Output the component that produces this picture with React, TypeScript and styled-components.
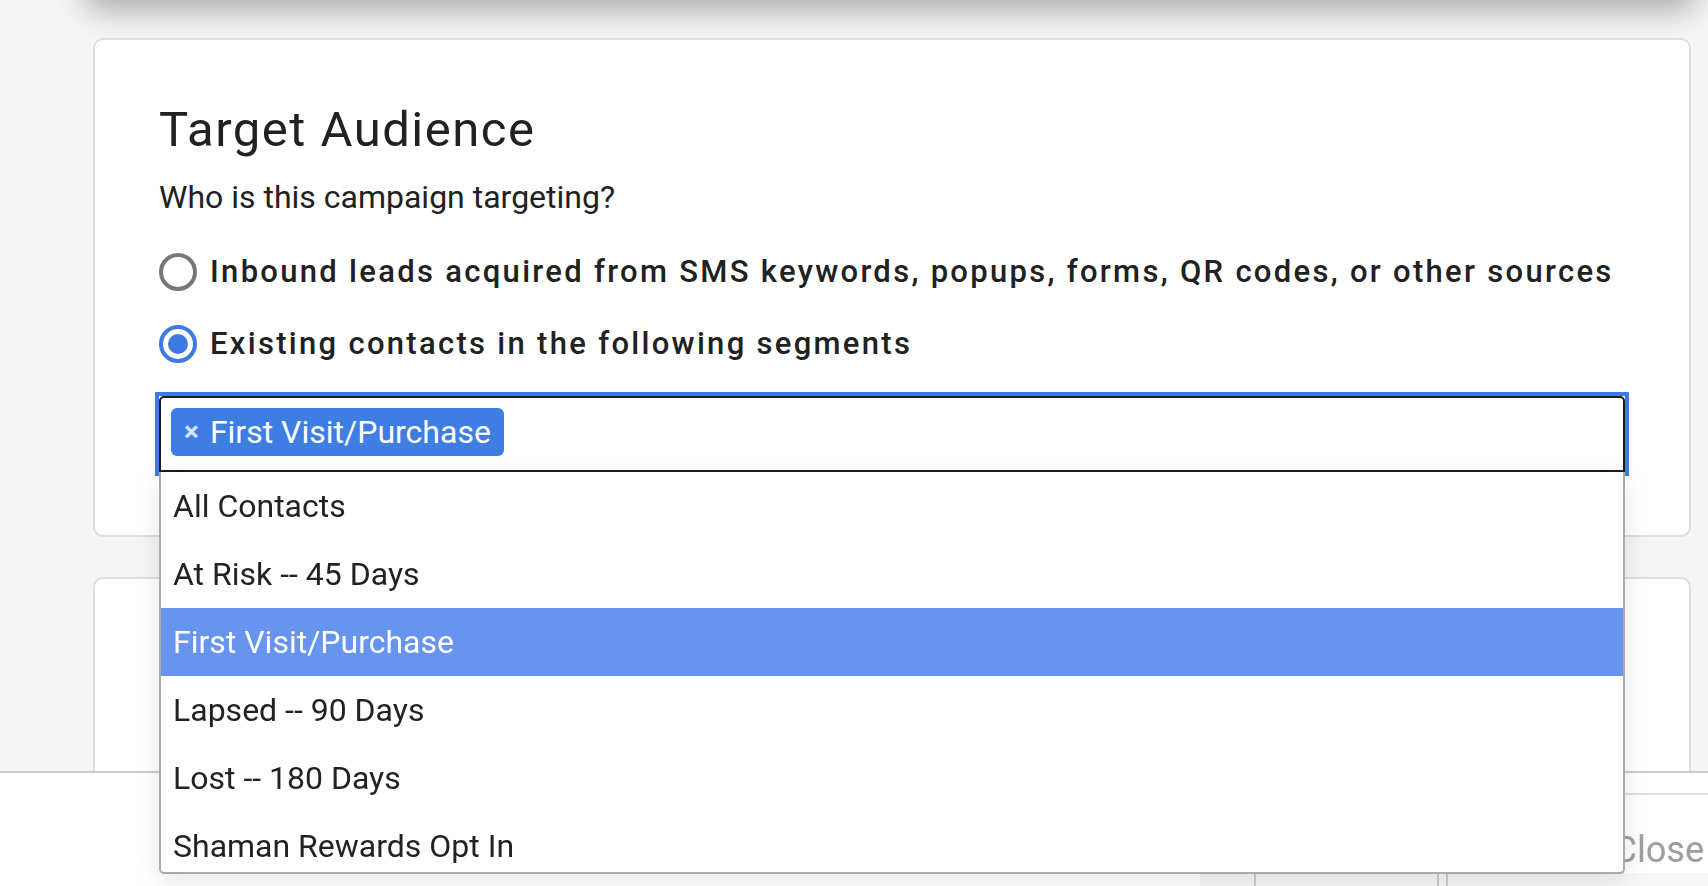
import React from "react";
import styled, { createGlobalStyle } from "styled-components";

const Global = createGlobalStyle`
  html, body { margin: 0; padding: 0; background: #f5f5f5; }
  body {
    font-family: Roboto, "Liberation Sans", Arial, sans-serif;
    color: #212121;
    overflow: hidden;
  }
  * { box-sizing: border-box; }
`;

const Page = styled.div`
  padding: 0 17px 0 93px;
  height: 886px;
  overflow: hidden;
`;

const TopBar = styled.div`
  height: 60px;
  margin-top: -60px;
  margin-right: 3px;
  background: #fff;
  box-shadow: 0 4px 30px 6px rgba(0, 0, 0, 0.3);
`;

const Card = styled.section<{ $gap: number; $minHeight?: number }>`
  margin-top: ${(p) => p.$gap}px;
  background: #fff;
  border: 2px solid #dedede;
  border-radius: 10px;
  padding: 62px 64px 63px 64px;
  min-height: ${(p) => p.$minHeight ?? 0}px;
`;

const Title = styled.h2`
  margin: 0;
  font-size: 49px;
  line-height: 56px;
  font-weight: 400;
  letter-spacing: 1.5px;
  color: #212121;
`;

const Subtitle = styled.p`
  margin: 19px 0 0;
  font-size: 32px;
  line-height: 40px;
  font-weight: 400;
  color: #212121;
`;

const RadioList = styled.div`
  margin-top: 35px;
  display: flex;
  flex-direction: column;
  gap: 32px;
`;

const RadioRow = styled.label`
  display: flex;
  align-items: center;
  gap: 13px;
  height: 40px;
  cursor: pointer;
`;

const RadioCircle = styled.span<{ $checked: boolean }>`
  width: 38px;
  height: 38px;
  flex: none;
  border-radius: 50%;
  border: 4px solid ${(p) => (p.$checked ? "#3d7be0" : "#777777")};
  display: flex;
  align-items: center;
  justify-content: center;
  &::after {
    content: "";
    width: 20px;
    height: 20px;
    border-radius: 50%;
    background: ${(p) => (p.$checked ? "#3d7be0" : "transparent")};
  }
`;

const RadioLabel = styled.span`
  font-size: 31px;
  line-height: 40px;
  font-weight: 500;
  letter-spacing: 2.3px;
  color: #212121;
  white-space: nowrap;
`;

const SelectWrap = styled.div`
  position: relative;
  margin-top: 32px;
  outline: 4px solid #3d7be0;
  outline-offset: 0;
`;

const SelectBox = styled.div`
  height: 76px;
  border: 2px solid #1c1c1c;
  border-radius: 5px 5px 0 0;
  background: #fff;
  padding: 10px 10px 14px 10px;
  display: flex;
  align-items: flex-start;
`;

const Chip = styled.span`
  display: inline-flex;
  align-items: center;
  gap: 11px;
  height: 48px;
  padding: 0 13px 0 13px;
  border-radius: 6px;
  background: #3e7de1;
  color: #fff;
  font-size: 32px;
  line-height: 48px;
`;

const ChipRemove = styled.span`
  font-size: 28px;
  font-weight: 700;
  color: rgba(255, 255, 255, 0.8);
  line-height: 1;
`;

const Dropdown = styled.ul`
  position: absolute;
  top: 100%;
  left: 0;
  right: 0;
  z-index: 5;
  margin: 0;
  padding: 0;
  list-style: none;
  background: #fff;
  border: 2px solid #aaaaaa;
  border-top: none;
  border-radius: 0 0 5px 5px;
  max-height: 402px;
  overflow: hidden;
  box-shadow: 0 8px 28px rgba(0, 0, 0, 0.1);
`;

const Option = styled.li<{ $active?: boolean }>`
  height: 68px;
  flex: none;
  display: flex;
  align-items: center;
  padding: 0 12px;
  font-size: 32px;
  color: ${(p) => (p.$active ? "#ffffff" : "#222222")};
  background: ${(p) => (p.$active ? "#6694ef" : "transparent")};
`;

const Footer = styled.footer`
  position: fixed;
  left: 0;
  right: 0;
  bottom: 0;
  height: 115px;
  z-index: 2;
  background: #fff;
  border-top: 2px solid #cccccc;
  display: flex;
  justify-content: flex-end;
`;

const FooterPanel = styled.div`
  width: 508px;
  margin-top: 20px;
  border-top: 2px solid #dddddd;
  display: flex;
  flex-direction: column;
`;

const CloseRow = styled.div`
  height: 78px;
  display: flex;
  align-items: flex-end;
  justify-content: flex-end;
  padding: 0 4px 3px 0;
`;

const CloseButton = styled.span`
  font-size: 36px;
  line-height: 40px;
  color: #9e9e9e;
`;

const TabStrip = styled.div`
  flex: 1;
  display: grid;
  grid-template-columns: 54px 183px 9px 1fr;
  background: #f7f7f7;
`;

const TabCell = styled.div<{ $first?: boolean }>`
  border-left: ${(p) => (p.$first ? "none" : "2px solid #cccccc")};
`;

const options = [
  "All Contacts",
  "At Risk -- 45 Days",
  "First Visit/Purchase",
  "Lapsed -- 90 Days",
  "Lost -- 180 Days",
  "Shaman Rewards Opt In",
];

export default function App() {
  return (
    <>
      <Global />
      <Page>
        <TopBar />
        <Card $gap={38}>
          <Title>Target Audience</Title>
          <Subtitle>Who is this campaign targeting?</Subtitle>
          <RadioList>
            <RadioRow>
              <RadioCircle $checked={false} />
              <RadioLabel>
                Inbound leads acquired from SMS keywords, popups, forms, QR codes, or other sources
              </RadioLabel>
            </RadioRow>
            <RadioRow>
              <RadioCircle $checked={true} />
              <RadioLabel>Existing contacts in the following segments</RadioLabel>
            </RadioRow>
          </RadioList>
          <SelectWrap>
            <SelectBox>
              <Chip>
                <ChipRemove>×</ChipRemove>
                First Visit/Purchase
              </Chip>
            </SelectBox>
            <Dropdown>
              {options.map((o) => (
                <Option key={o} $active={o === "First Visit/Purchase"}>
                  {o}
                </Option>
              ))}
            </Dropdown>
          </SelectWrap>
        </Card>
        <Card $gap={40} $minHeight={400} />
      </Page>
      <Footer>
        <FooterPanel>
          <CloseRow>
            <CloseButton>Close</CloseButton>
          </CloseRow>
          <TabStrip>
            <TabCell $first />
            <TabCell />
            <TabCell />
            <TabCell />
          </TabStrip>
        </FooterPanel>
      </Footer>
    </>
  );
}
